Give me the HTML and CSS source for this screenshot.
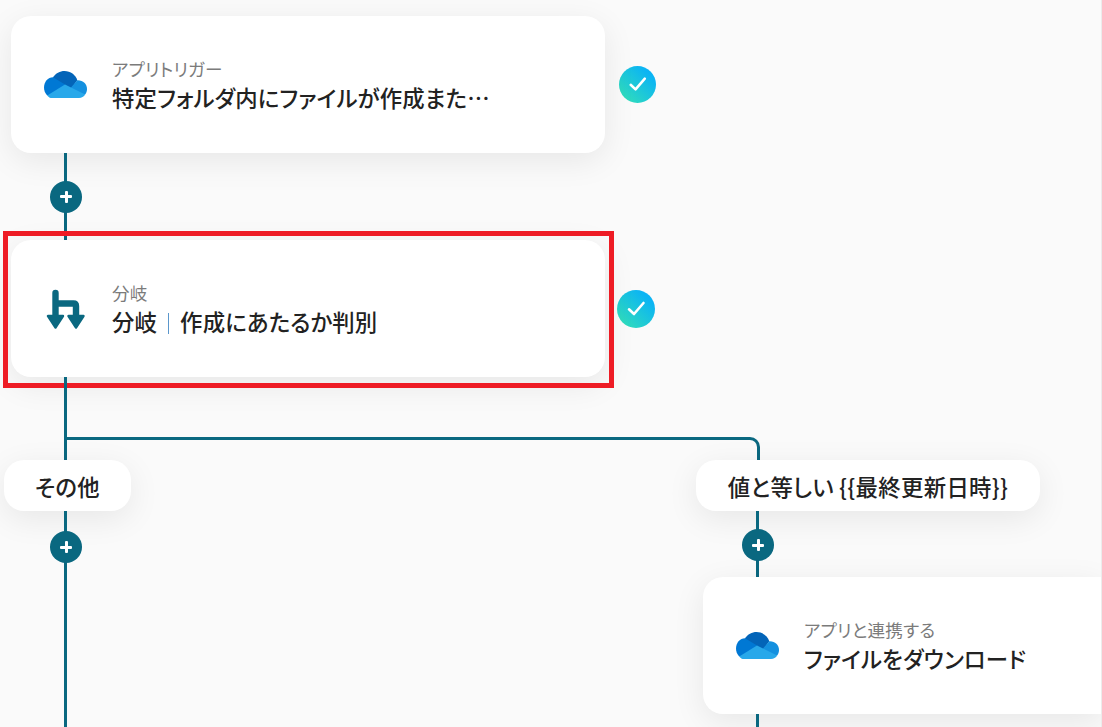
FILE: index.html
```html
<!DOCTYPE html>
<html lang="ja">
<head>
    <meta charset="UTF-8">
    <title>フローボット</title>
    <link rel="stylesheet" href="styles.css">
</head>
<body>
    <svg class="defs" width="0" height="0">
        <defs>
            <linearGradient id="check-bg" x1="0" y1="1" x2="1" y2="0">
                <stop offset="0.12" stop-color="#30dcbc"/>
                <stop offset="0.8" stop-color="#0bb4f4"/>
            </linearGradient>
            <symbol id="onedrive" viewBox="0 0 43 27">
                <path fill="#0364b8" d="M9 6.3C11.5 2.4 16 0 20.5 0C26.5 0 31.6 3.8 33.3 9.3L27 18L9 10Z"/>
                <path fill="#0078d4" d="M9 6.3C4 6.3 0 11 0 16.5C0 19.6 1.2 22.5 3.2 24.4L14 22L21 13.5L9 6.3Z"/>
                <path fill="#1490df" d="M33.3 9.3C38.8 9 43 13 43 18C43 20 42.3 22 41.2 23.6L30 24L27 16.5Z"/>
                <path fill="#28a8ea" d="M21 13.5L41.2 23.6C40 25.6 37.5 27 35 27H8C6 27 4.4 26 3.2 24.4L21 13.5Z"/>
            </symbol>
            <symbol id="check" viewBox="0 0 38 38">
                <circle cx="19" cy="19" r="19" fill="url(#check-bg)"/>
                <path d="M12 19.3L17 24L26.5 13" fill="none" stroke="#fff" stroke-width="2.6" stroke-linecap="round" stroke-linejoin="round"/>
            </symbol>
        </defs>
    </svg>

    <main class="canvas">
        <section class="branch-left">
            <div class="step">
                <div class="card">
                    <svg class="app-icon"><use href="#onedrive"/></svg>
                    <div class="card-text">
                        <p class="label">アプリトリガー</p>
                        <p class="title">特定フォルダ内にファイルが作成または更新されたら</p>
                    </div>
                </div>
                <svg class="check check-first"><use href="#check"/></svg>
            </div>

            <div class="link link-first">
                <span class="plus"></span>
            </div>

            <div class="step">
                <div class="card card-selected">
                    <svg class="branch-icon" viewBox="0 0 40 40">
                        <path d="M9.5 4V28M9.5 14.5H27.5Q30 14.5 30 17V28" fill="none" stroke="#0a6880" stroke-width="6.4" stroke-linecap="round" stroke-linejoin="round"/>
                        <path d="M2 27H17L9.5 38.5ZM22.5 27H37.5L30 38.5Z" fill="#0a6880" stroke="#0a6880" stroke-width="2.4" stroke-linejoin="round"/>
                    </svg>
                    <div class="card-text">
                        <p class="label">分岐</p>
                        <p class="title">分岐<span class="sep"></span>作成にあたるか判別</p>
                    </div>
                </div>
                <svg class="check check-second"><use href="#check"/></svg>
            </div>

            <div class="link link-split"></div>
            <div class="elbow"></div>

            <div class="pill pill-left">その他</div>

            <div class="link link-rest">
                <span class="plus"></span>
            </div>
        </section>

        <section class="branch-right">
            <div class="pill">値と等しい {{最終更新日時}}</div>

            <div class="link link-right">
                <span class="plus"></span>
            </div>

            <div class="card card-wide">
                <svg class="app-icon"><use href="#onedrive"/></svg>
                <div class="card-text">
                    <p class="label">アプリと連携する</p>
                    <p class="title">ファイルをダウンロード</p>
                </div>
            </div>

            <div class="link link-end"></div>
        </section>
    </main>
</body>
</html>
```

FILE: styles.css
```css
*, *::before, *::after {
    box-sizing: border-box;
}
html, body {
    margin: 0;
    height: 727px;
    overflow: hidden;
}
body {
    font-family: "Noto Sans CJK JP", "Noto Sans", sans-serif;
    font-feature-settings: "palt";
    background: #fafafa;
    color: #222;
}
.defs {
    display: block;
}
p {
    margin: 0;
}
.canvas {
    display: flex;
    height: 727px;
    overflow: hidden;
    position: relative;
    border-right: 1px solid #ececec;
}
.branch-left {
    width: 696px;
    flex: none;
    padding-top: 16px;
}
.branch-right {
    flex: 1;
    min-width: 0;
    padding-top: 460px;
}
.step {
    display: flex;
    align-items: center;
    gap: 13px;
    margin-left: 11px;
}
.card {
    display: flex;
    align-items: center;
    width: 594px;
    height: 137px;
    padding-left: 33px;
    background: white;
    border-radius: 20px;
    box-shadow: 0 8px 32px rgba(0, 0, 0, 0.08);
    position: relative;
}
.card-selected::after {
    content: "";
    position: absolute;
    top: -9px;
    left: -8px;
    width: 611px;
    height: 157px;
    border: 5px solid #ee1c25;
}
.card-wide {
    width: 399px;
    margin-left: 7px;
    border-radius: 20px 0 0 20px;
}
.app-icon {
    width: 43px;
    height: 27px;
    flex: none;
}
.branch-icon {
    width: 40px;
    height: 40px;
    flex: none;
    margin-left: 2px;
    margin-right: 1px;
}
.card-text {
    margin-left: 25px;
    min-width: 0;
}
.label {
    font-size: 17.6px;
    line-height: 24px;
    letter-spacing: 0.25px;
    color: #7b7b7b;
}
.title {
    width: 380px;
    font-size: 22.4px;
    font-weight: 500;
    line-height: 32px;
    letter-spacing: 0.15px;
    white-space: nowrap;
    overflow: hidden;
    text-overflow: ellipsis;
}
.sep {
    display: inline-block;
    width: 1px;
    height: 21px;
    margin: 0 11px;
    vertical-align: -3px;
    background: #5b97cc;
}
.check {
    width: 38px;
    height: 38px;
    flex: none;
}
.check-first {
    width: 37px;
    height: 37px;
    margin-left: 1px;
}
.check-second {
    margin-left: -1px;
}
.link {
    position: relative;
    display: flex;
    justify-content: center;
    align-items: center;
    width: 32px;
    margin-left: 50px;
}
.link::before {
    content: "";
    position: absolute;
    top: 0;
    bottom: 0;
    left: 14px;
    width: 3px;
    background: #0a6880;
}
.link-first {
    height: 87px;
}
.link-split {
    height: 83px;
}
.link-rest {
    height: 216px;
    align-items: flex-start;
    padding-top: 20px;
}
.link-right {
    height: 66px;
    margin-left: 46px;
    align-items: flex-start;
    padding-top: 18px;
}
.link-end {
    height: 13px;
    margin-left: 46px;
}
.plus {
    position: relative;
    width: 32px;
    height: 32px;
    border-radius: 50%;
    background: #0a6880;
}
.plus::before,
.plus::after {
    content: "";
    position: absolute;
    background: white;
    border-radius: 1px;
}
.plus::before {
    top: 10px;
    left: 14.5px;
    width: 3px;
    height: 12px;
}
.plus::after {
    top: 14.5px;
    left: 10px;
    width: 12px;
    height: 3px;
}
.elbow {
    position: absolute;
    top: 437px;
    left: 64px;
    width: 696px;
    height: 23px;
    border-top: 3px solid #0a6880;
    border-right: 3px solid #0a6880;
    border-top-right-radius: 10px;
}
.pill {
    display: inline-flex;
    align-items: center;
    justify-content: center;
    width: 344px;
    height: 51px;
    background: white;
    border-radius: 20px;
    box-shadow: 0 8px 32px rgba(0, 0, 0, 0.08);
    font-size: 22.4px;
    font-weight: 500;
    letter-spacing: 0.3px;
    vertical-align: top;
    position: relative;
}
.pill-left {
    display: flex;
    width: 127px;
    margin-left: 4px;
}
```
